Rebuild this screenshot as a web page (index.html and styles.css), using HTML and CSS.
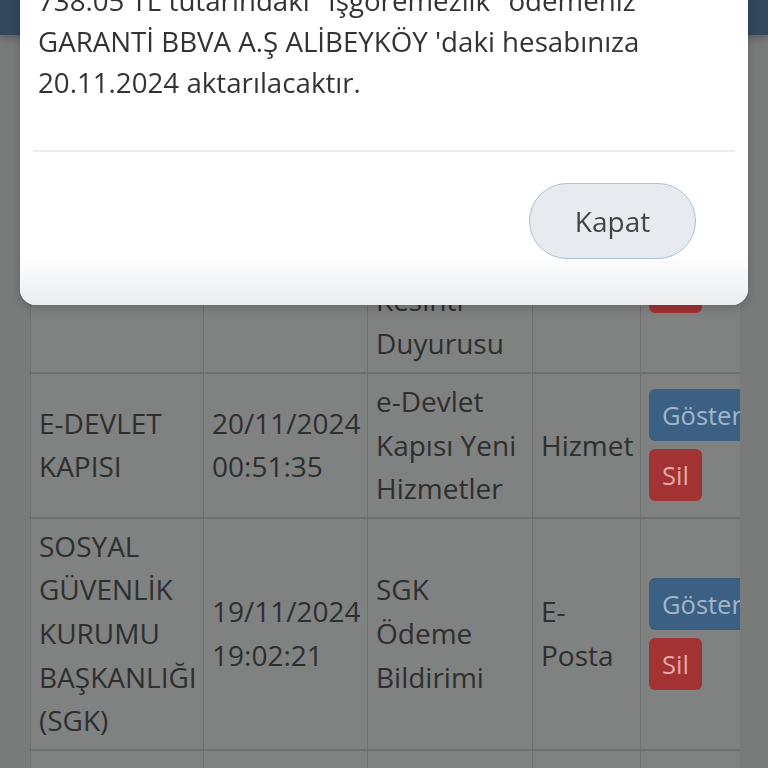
FILE: index.html
```html
<!DOCTYPE html>
<html lang="tr">
<head>
<meta charset="utf-8">
<title>Mesajlar</title>
<link rel="stylesheet" href="styles.css">
</head>
<body>
<header class="topbar"></header>
<main class="page">
  <div class="table-wrap">
    <table class="inbox">
      <colgroup>
        <col class="c-from"><col class="c-date"><col class="c-subject"><col class="c-type"><col class="c-action">
      </colgroup>
      <thead>
        <tr><th>Kurum</th><th>Tarih</th><th>Konu</th><th>Tür</th><th>İşlem</th></tr>
      </thead>
      <tbody>
        <tr>
          <td>İSKİ</td>
          <td><span class="dt">20/11/2024</span><span class="dt">09:14:02</span></td>
          <td>Genel Müdürlük Planlı Kesinti Duyurusu</td>
          <td>SMS</td>
          <td><button class="btn btn-show">Göster</button><button class="btn btn-del">Sil</button></td>
        </tr>
        <tr>
          <td>E-DEVLET KAPISI</td>
          <td><span class="dt">20/11/2024</span><span class="dt">00:51:35</span></td>
          <td>e-Devlet Kapısı Yeni Hizmetler</td>
          <td>Hizmet</td>
          <td><button class="btn btn-show">Göster</button><button class="btn btn-del">Sil</button></td>
        </tr>
        <tr>
          <td>SOSYAL GÜVENLİK KURUMU BAŞKANLIĞI (SGK)</td>
          <td><span class="dt">19/11/2024</span><span class="dt">19:02:21</span></td>
          <td>SGK Ödeme Bildirimi</td>
          <td>E-Posta</td>
          <td><button class="btn btn-show">Göster</button><button class="btn btn-del">Sil</button></td>
        </tr>
        <tr>
          <td>SOSYAL GÜVENLİK KURUMU BAŞKANLIĞI (SGK)</td>
          <td><span class="dt">18/11/2024</span><span class="dt">11:20:45</span></td>
          <td>SGK Ödeme Bildirimi</td>
          <td>E-Posta</td>
          <td><button class="btn btn-show">Göster</button><button class="btn btn-del">Sil</button></td>
        </tr>
      </tbody>
    </table>
  </div>
</main>

<div class="modal" role="dialog">
  <div class="modal-body">
    <p class="message">738.05 TL tutarındaki "İşgöremezlik" ödemeniz GARANTİ BBVA A.Ş ALİBEYKÖY 'daki hesabınıza 20.11.2024 aktarılacaktır.</p>
  </div>
  <div class="divider"></div>
  <div class="modal-footer">
    <button class="btn-close">Kapat</button>
  </div>
</div>
</body>
</html>
```
FILE: styles.css
```css
* { box-sizing: border-box; }
html, body { margin: 0; padding: 0; }
body {
  background: #797a7a;
  font-family: "Open Sans", "Noto Sans", sans-serif;
  color: #2e2f2f;
  overflow: hidden;
  height: 768px;
}
.topbar {
  height: 35px;
  background: #34475b;
  box-shadow: 0 3px 8px rgba(0,0,0,0.25);
}
.page {
  padding: 47.5px 28px 0 30px;
}
.table-wrap {
  width: 710px;
  overflow: hidden;
}
.inbox {
  border-collapse: collapse;
  table-layout: fixed;
  width: 737px;
  background: #808181;
  font-size: 28px;
  line-height: 43.6px;
}
.c-from { width: 173px; }
.c-date { width: 164px; }
.c-subject { width: 165px; }
.c-type { width: 108px; }
.c-action { width: 127px; }
.inbox th, .inbox td {
  border-left: 1px solid #6f7070;
  border-right: 1px solid #6f7070;
  border-top: 2px solid #6f7070;
  border-bottom: 2px solid #6f7070;
  padding: 6px 8px;
  vertical-align: middle;
  text-align: left;
  font-weight: 400;
  overflow: visible;
}
.inbox th { font-weight: 600; }
.dt { display: block; white-space: nowrap; }
.btn {
  display: block;
  border: 0;
  font-family: inherit;
  font-size: 25.5px;
  line-height: 38px;
  padding: 7px 13px;
  border-radius: 6px;
  white-space: nowrap;
}
.btn-show {
  background: #3c5f84;
  color: #a2b6ca;
  margin-bottom: 8px;
}
.btn-del {
  background: #a33333;
  color: #e3a8a8;
}

.modal {
  position: fixed;
  top: -42px;
  left: 20px;
  width: 728px;
  background: #ffffff;
  border-radius: 0 0 16px 16px;
  box-shadow: 0 3px 10px rgba(0,0,0,0.2);
  overflow: hidden;
}
.modal-body {
  padding: 21.5px 18px 47.5px 18px;
}
.message {
  margin: 0;
  font-size: 27.7px;
  line-height: 41px;
  color: #333333;
}
.divider {
  height: 2px;
  margin: 0 13px;
  background: #ebebeb;
}
.modal-footer {
  display: flex;
  justify-content: flex-end;
  padding: 31px 52px 46px 0;
  background: linear-gradient(to bottom, #ffffff 0, #ffffff 66%, #ebedf0 100%);
}
.btn-close {
  width: 167px;
  height: 76px;
  border-radius: 38px;
  border: 1.5px solid #a9c1d9;
  background: #e7eaee;
  color: #444;
  font-family: inherit;
  font-size: 28px;
}
```
